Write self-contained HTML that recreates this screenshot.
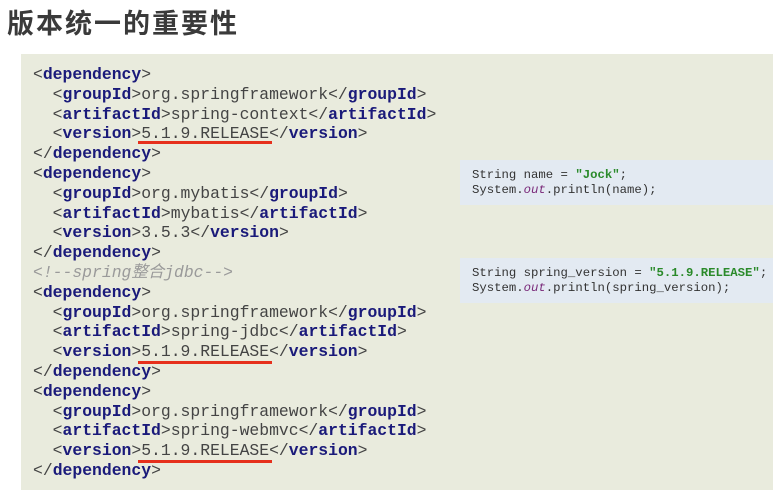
<!DOCTYPE html>
<html><head><meta charset="utf-8"><style>
body{margin:0;width:773px;height:490px;background:#fff;position:relative;overflow:hidden;font-family:"Liberation Mono",monospace}
.t{position:absolute;left:7px;top:2px;font:bold 27px "Liberation Sans","Noto Sans CJK SC",sans-serif;color:#3a3a3a;letter-spacing:2px}
.box{position:absolute;left:21px;top:54px;width:752px;height:436px;background:#e9ebdd}
pre{position:absolute;left:33px;top:65px;margin:0;font:16.4px/19.8px "Liberation Mono","Noto Sans CJK SC",monospace;color:#444}
b{color:#1a1a7a}
.c{color:#9a9a9a;font-style:italic}
.u{position:absolute;height:3px;background:#e6301c;left:138px;width:134px}
.bl{position:absolute;left:460px;width:313px;height:45px;background:#e3eaf2}
.bl pre{left:12px;top:8px;font-size:12.3px;line-height:15px;color:#333}
.s{color:#2a8a2a;font-weight:bold}
.o{color:#7a2a7a;font-style:italic}
</style></head><body>
<div class="t">版本统一的重要性</div>
<div class="box"></div>
<pre>&lt;<b>dependency</b>&gt;
  &lt;<b>groupId</b>&gt;org.springframework&lt;/<b>groupId</b>&gt;
  &lt;<b>artifactId</b>&gt;spring-context&lt;/<b>artifactId</b>&gt;
  &lt;<b>version</b>&gt;5.1.9.RELEASE&lt;/<b>version</b>&gt;
&lt;/<b>dependency</b>&gt;
&lt;<b>dependency</b>&gt;
  &lt;<b>groupId</b>&gt;org.mybatis&lt;/<b>groupId</b>&gt;
  &lt;<b>artifactId</b>&gt;mybatis&lt;/<b>artifactId</b>&gt;
  &lt;<b>version</b>&gt;3.5.3&lt;/<b>version</b>&gt;
&lt;/<b>dependency</b>&gt;
<span class="c">&lt;!--spring整合jdbc--&gt;</span>
&lt;<b>dependency</b>&gt;
  &lt;<b>groupId</b>&gt;org.springframework&lt;/<b>groupId</b>&gt;
  &lt;<b>artifactId</b>&gt;spring-jdbc&lt;/<b>artifactId</b>&gt;
  &lt;<b>version</b>&gt;5.1.9.RELEASE&lt;/<b>version</b>&gt;
&lt;/<b>dependency</b>&gt;
&lt;<b>dependency</b>&gt;
  &lt;<b>groupId</b>&gt;org.springframework&lt;/<b>groupId</b>&gt;
  &lt;<b>artifactId</b>&gt;spring-webmvc&lt;/<b>artifactId</b>&gt;
  &lt;<b>version</b>&gt;5.1.9.RELEASE&lt;/<b>version</b>&gt;
&lt;/<b>dependency</b>&gt;</pre>
<div class="u" style="top:141px"></div>
<div class="u" style="top:361px"></div>
<div class="u" style="top:460px"></div>
<div class="bl" style="top:160px"><pre>String name = <span class="s">"Jock"</span>;
System.<span class="o">out</span>.println(name);</pre></div>
<div class="bl" style="top:258px"><pre>String spring_version = <span class="s">"5.1.9.RELEASE"</span>;
System.<span class="o">out</span>.println(spring_version);</pre></div>
</body></html>
